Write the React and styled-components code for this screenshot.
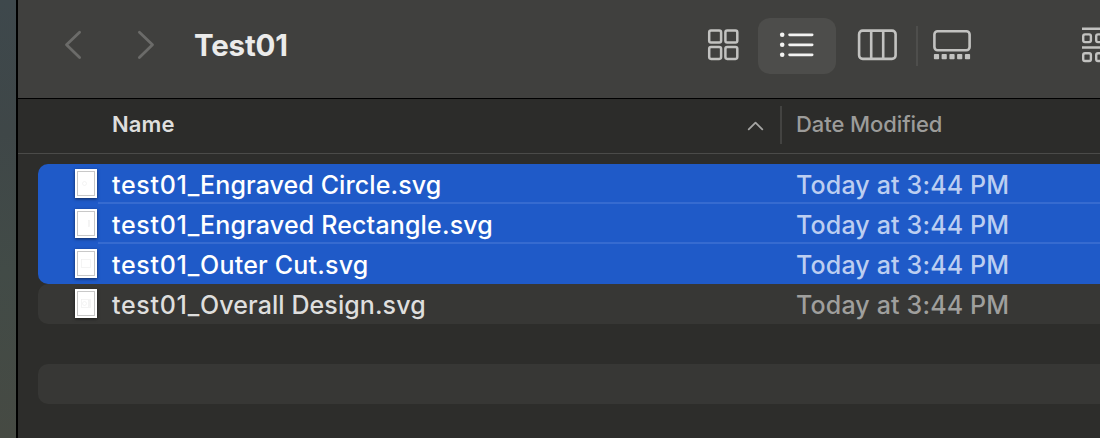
import React from "react";
import styled, { createGlobalStyle } from "styled-components";

const Global = createGlobalStyle`
  * { box-sizing: border-box; }
  html, body { margin: 0; padding: 0; background: #2d2d2b; }
  body { font-family: Inter, "Liberation Sans", sans-serif; overflow: hidden; -webkit-font-smoothing: antialiased; }
`;

const Desktop = styled.div`
  display: flex;
  width: 1100px;
  height: 438px;
  overflow: hidden;
  padding-left: 16px;
  background: linear-gradient(180deg, #3e484c 0%, #3f4748 30%, #424b47 62%, #464a43 100%);
`;

const Window = styled.div`
  flex: 1;
  min-width: 0;
  display: flex;
  flex-direction: column;
  overflow: hidden;
  border-left: 2px solid #000;
  background: #2d2d2b;
`;

const Toolbar = styled.div`
  height: 99px;
  flex: none;
  display: flex;
  align-items: flex-start;
  background: #40403e;
  border-bottom: 1px solid #000;
  padding: 18px 0 0 40px;
  color: #c2c2c0;
`;

const NavButton = styled.div`
  flex: none;
  width: 36px;
  height: 56px;
  margin-right: ${(p) => p.$gap}px;
  color: #6b6b69;
`;

const Title = styled.div`
  flex: none;
  width: 494px;
  padding-left: 8px;
  font-size: 29.5px;
  line-height: 55px;
  font-weight: 700;
  letter-spacing: -0.2px;
  color: #ebebea;
  white-space: nowrap;
`;

const ViewButton = styled.div`
  flex: none;
  width: 78px;
  height: 56px;
  border-radius: 12px;
  background: ${(p) => (p.$active ? "#4d4d4b" : "transparent")};
  color: ${(p) => (p.$active ? "#f2f2f1" : "#c2c2c0")};
`;

const Divider = styled.div`
  flex: none;
  width: 2px;
  height: ${(p) => p.$h}px;
  margin: ${(p) => p.$m || "0"};
  background: ${(p) => p.$c};
`;

const GroupButton = styled(ViewButton)`
  margin-left: 72px;
`;

const Header = styled.div`
  height: 55px;
  flex: none;
  display: flex;
  align-items: flex-start;
  padding: 7px 0 0 94px;
  background: #2c2c2a;
  border-bottom: 1px solid #4b4b49;
`;

const HeaderCell = styled.div`
  width: ${(p) => (p.$w ? `${p.$w}px` : "auto")};
  padding-left: ${(p) => p.$pad || 0}px;
  font-size: 22px;
  line-height: 37px;
  font-weight: ${(p) => (p.$bold ? 600 : 450)};
  letter-spacing: ${(p) => p.$ls}px;
  color: ${(p) => (p.$bold ? "#dededd" : "#9c9c9a")};
  white-space: nowrap;
`;

const SortArrow = styled.svg`
  display: block;
  flex: none;
  width: 34px;
  height: 38px;
`;

const List = styled.div`
  padding: 10px 0 0 20px;
`;

const Selection = styled.div`
  border-radius: 10px 0 0 10px;
  overflow: hidden;
  background: ${(p) => p.$bg};
`;

const Row = styled.div`
  height: 40px;
  display: flex;
  padding: 5px 0 0 37px;
  background: ${(p) =>
    p.$line ? "linear-gradient(#366bd0, #366bd0) 60px 38px / 1100px 2px no-repeat" : "none"};
`;

const Thumb = styled.svg`
  display: block;
  flex: none;
  width: 22px;
  height: 29px;
  margin-right: 15px;
  box-shadow: 0 1px 3px rgba(0, 0, 0, 0.55);
`;

const FileName = styled.div`
  width: 684px;
  flex: none;
  font-size: 25px;
  line-height: 33px;
  letter-spacing: ${(p) => p.$ls}px;
  font-weight: 500;
  color: ${(p) => (p.$selected ? "#fff" : "#dededd")};
  white-space: nowrap;
`;

const Prefix = styled.span`
  letter-spacing: 0.7px;
`;

const Modified = styled.div`
  font-size: 25px;
  line-height: 33px;
  font-weight: 450;
  letter-spacing: 0.16px;
  color: ${(p) => (p.$selected ? "#bccef1" : "#9f9f9d")};
  white-space: nowrap;
`;

const Gap = styled.div`
  height: 40px;
`;

const marks = {
  circle: <circle cx="9.5" cy="14.5" r="2" />,
  rect: <rect x="13.5" y="11.5" width="1" height="6" />,
  outer: <rect x="6.5" y="10.5" width="9" height="8" />,
  all: (
    <>
      <rect x="6.5" y="10.5" width="9" height="8" />
      <circle cx="9.5" cy="14.5" r="2" />
      <rect x="13.5" y="11.5" width="1" height="6" />
    </>
  ),
};

function File({ name, mark, ls, selected, line }) {
  return (
    <Row $line={line}>
      <Thumb viewBox="0 0 22 29">
        <rect width="22" height="29" fill="#fff" />
        <rect x="2.5" y="2.5" width="17" height="24" fill="#fff" stroke="#c8c8c8" />
        <g fill="none" stroke="#efefef" strokeWidth="0.7">{marks[mark]}</g>
      </Thumb>
      <FileName $selected={selected} $ls={ls}>
        <Prefix>test01_</Prefix>{name}
      </FileName>
      <Modified $selected={selected}>Today at 3:44 PM</Modified>
    </Row>
  );
}

export default function App() {
  return (
    <Desktop>
      <Global />
      <Window>
        <Toolbar>
          <NavButton $gap={36}>
            <svg width="36" height="56" fill="none" stroke="currentColor" strokeWidth="2.8" strokeLinecap="round" strokeLinejoin="round">
              <path d="M21.6 14.2 8.5 26.8 21.6 39.5" />
            </svg>
          </NavButton>
          <NavButton $gap={20}>
            <svg width="36" height="56" fill="none" stroke="currentColor" strokeWidth="2.8" strokeLinecap="round" strokeLinejoin="round">
              <path d="M9.4 14.2 22.5 26.8 9.4 39.5" />
            </svg>
          </NavButton>
          <Title>Test01</Title>
          <ViewButton>
            <svg width="78" height="56" fill="none" stroke="currentColor" strokeWidth="2.5">
              <rect x="29.2" y="12.6" width="11.9" height="11.9" rx="1.8" />
              <rect x="45.4" y="12.6" width="11.9" height="11.9" rx="1.8" />
              <rect x="29.2" y="29" width="11.9" height="11.9" rx="1.8" />
              <rect x="45.4" y="29" width="11.9" height="11.9" rx="1.8" />
            </svg>
          </ViewButton>
          <ViewButton $active>
            <svg width="78" height="56" stroke="currentColor" strokeWidth="2.8" strokeLinecap="round">
              {[16.8, 26.8, 36.8].map((y) => (
                <g key={y}>
                  <circle cx="24.2" cy={y} r="2.3" fill="currentColor" stroke="none" />
                  <path d={`M31.6 ${y}H54.1`} />
                </g>
              ))}
            </svg>
          </ViewButton>
          <ViewButton>
            <svg width="78" height="56" fill="none" stroke="currentColor" strokeWidth="2.6">
              <rect x="23.1" y="12.6" width="36.5" height="28.3" rx="3.6" />
              <path d="M35.2 12.6V41M47.2 12.6V41" />
            </svg>
          </ViewButton>
          <Divider $h={40} $c="#4e4e4c" $m="8px 0 0 2px" />
          <ViewButton>
            <svg width="78" height="56" fill="none" stroke="currentColor" strokeWidth="2.6">
              <rect x="16.4" y="13.3" width="35.2" height="18.9" rx="3.2" />
              <g fill="currentColor" stroke="none">
                {[15.9, 23.6, 31.4, 39.1, 46.9].map((x) => (
                  <rect key={x} x={x} y="36" width="5.2" height="5.2" rx="0.8" />
                ))}
              </g>
            </svg>
          </ViewButton>
          <GroupButton>
            <svg width="78" height="56" fill="none" stroke="currentColor" strokeWidth="2.4">
              <path d="M14 10.8H56M14 29.5H56" />
              {[16.4, 35.3].map((y) => (
                <g key={y}>
                  <rect x="15.2" y={y} width="7.7" height="7.7" rx="1.8" />
                  <rect x="28.2" y={y} width="7.7" height="7.7" rx="1.8" />
                </g>
              ))}
            </svg>
          </GroupButton>
        </Toolbar>
        <Header>
          <HeaderCell $w={634} $bold $ls={0.1}>Name</HeaderCell>
          <SortArrow viewBox="0 0 34 38" fill="none" stroke="#a5a5a3" strokeWidth="1.8" strokeLinecap="round" strokeLinejoin="round">
            <path d="M2.7 23.4 9.5 16.6 16.3 23.4" />
          </SortArrow>
          <Divider $h={38} $c="#434341" />
          <HeaderCell $pad={14} $ls={-0.08}>Date Modified</HeaderCell>
        </Header>
        <List>
          <Selection $bg="#1f5ac8">
            <File name="Engraved Circle.svg" mark="circle" ls={0.1} selected line />
            <File name="Engraved Rectangle.svg" mark="rect" ls={0.16} selected line />
            <File name="Outer Cut.svg" mark="outer" ls={0.2} selected />
          </Selection>
          <Selection $bg="#373735">
            <File name="Overall Design.svg" mark="all" ls={0.08} />
          </Selection>
          <Gap />
          <Selection $bg="#373735"><Gap /></Selection>
        </List>
      </Window>
    </Desktop>
  );
}
